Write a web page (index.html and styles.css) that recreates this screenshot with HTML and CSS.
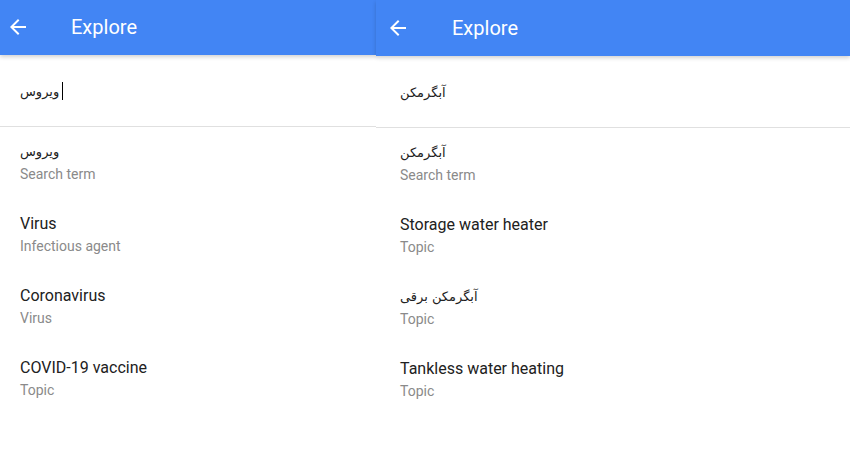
FILE: index.html
```html
<!DOCTYPE html>
<html lang="en">
<head>
  <meta charset="UTF-8">
  <meta name="viewport" content="width=device-width, initial-scale=1.0">
  <title>Explore</title>
  <link rel="stylesheet" href="styles.css">
</head>
<body>
  <div class="screens">
    <!-- 左のパネル -->
    <div class="panel panel-left">
      <header class="appbar">
        <svg class="back" width="16" height="16" viewBox="0 0 16 16"><path d="M16 7H3.8l5.6-5.6L8 0 0 8l8 8 1.4-1.4L3.8 9H16z" fill="#fff"/></svg>
        <span class="appbar-title">Explore</span>
      </header>
      <div class="search"><span class="query" dir="rtl">ویروس</span><span class="caret"></span></div>
      <ul class="results">
        <li><div class="title" dir="rtl">ویروس</div><div class="sub">Search term</div></li>
        <li><div class="title">Virus</div><div class="sub">Infectious agent</div></li>
        <li><div class="title">Coronavirus</div><div class="sub">Virus</div></li>
        <li><div class="title">COVID-19 vaccine</div><div class="sub">Topic</div></li>
      </ul>
    </div>

    <!-- 右のパネル -->
    <div class="panel panel-right">
      <header class="appbar">
        <svg class="back" width="16" height="16" viewBox="0 0 16 16"><path d="M16 7H3.8l5.6-5.6L8 0 0 8l8 8 1.4-1.4L3.8 9H16z" fill="#fff"/></svg>
        <span class="appbar-title">Explore</span>
      </header>
      <div class="search"><span class="query" dir="rtl">آبگرمکن</span></div>
      <ul class="results">
        <li><div class="title" dir="rtl">آبگرمکن</div><div class="sub">Search term</div></li>
        <li><div class="title">Storage water heater</div><div class="sub">Topic</div></li>
        <li><div class="title" dir="rtl">آبگرمکن برقی</div><div class="sub">Topic</div></li>
        <li><div class="title">Tankless water heating</div><div class="sub">Topic</div></li>
      </ul>
    </div>
  </div>
</body>
</html>
```

FILE: styles.css
```css
body {
  margin: 0;
  padding: 0;
  background-color: #fff;
  font-family: Roboto, "DejaVu Sans", sans-serif;
  color: #212121;
}
.screens {
  display: flex;
  width: 850px;
  height: 450px;
  overflow: hidden;
}
.panel {
  display: flex;
  flex-direction: column;
}
.panel-left {
  width: 376px;
}
.panel-right {
  flex: 1;
  padding-top: 1px;
}
.appbar {
  position: relative;
  z-index: 1;
  display: flex;
  align-items: center;
  height: 55px;
  background-color: #4285f4;
  box-shadow: 0 2px 4px rgba(0, 0, 0, 0.18);
  color: #fff;
}
.panel-right .appbar {
  margin-top: -1px;
  height: 56px;
}
.back {
  margin-left: 10px;
  margin-top: -1px;
}
.panel-right .back {
  margin-left: 14px;
}
.appbar-title {
  margin-left: 45px;
  font-size: 20px;
  margin-top: -1px;
}
.panel-right .appbar-title {
  margin-left: 46px;
}
.search {
  display: flex;
  align-items: center;
  height: 22px;
  padding: 25px 20px 24px;
  border-bottom: 1px solid #e0e0e0;
  font-size: 14px;
}
.panel-right .search {
  padding-left: 24px;
}
.query {
  font-family: "DejaVu Sans", sans-serif;
  font-size: 13px;
}
.caret {
  display: inline-block;
  width: 1px;
  height: 18px;
  margin-left: 3px;
  background-color: #000;
}
.results {
  list-style: none;
  margin: 0;
  padding: 15px 0 0;
}
.results li {
  padding: 0 20px 28px;
}
.panel-right .results li {
  padding-left: 24px;
}
.results li:first-child .title {
  margin-top: -1px;
}
.title {
  font-size: 16px;
  line-height: 22px;
  text-align: left;
}
.title[dir="rtl"] {
  font-family: "DejaVu Sans", sans-serif;
  font-size: 13px;
}
.sub {
  font-size: 14px;
  line-height: 22px;
  color: #8a8a8a;
}
```
